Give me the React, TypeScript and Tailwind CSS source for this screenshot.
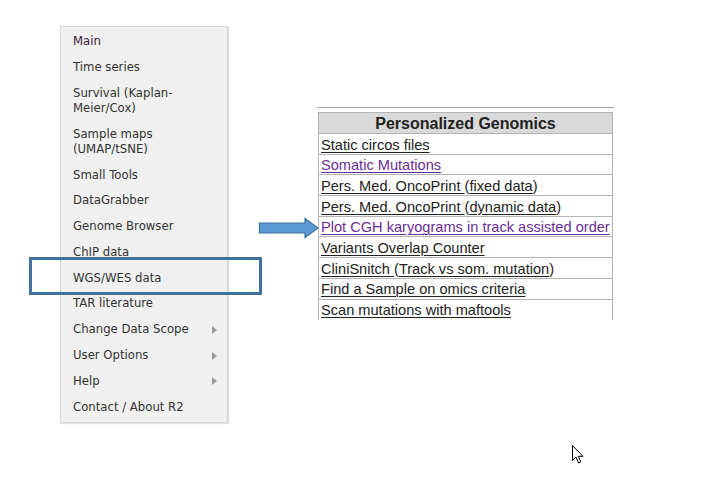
import React from "react";

const menu: { label: string[]; arrow?: boolean; color?: string }[] = [
  { label: ["Main"], color: "#3d1a3d" },
  { label: ["Time series"] },
  { label: ["Survival (Kaplan-", "Meier/Cox)"] },
  { label: ["Sample maps", "(UMAP/tSNE)"] },
  { label: ["Small Tools"] },
  { label: ["DataGrabber"] },
  { label: ["Genome Browser"] },
  { label: ["ChIP data"] },
  { label: ["WGS/WES data"] },
  { label: ["TAR literature"] },
  { label: ["Change Data Scope"], arrow: true },
  { label: ["User Options"], arrow: true },
  { label: ["Help"], arrow: true },
  { label: ["Contact / About R2"] },
];

const U = ({ children, c }: { children: React.ReactNode; c?: string }) => (
  <span className="underline decoration-1 underline-offset-[2px]" style={c ? { color: c } : undefined}>
    {children}
  </span>
);

const purple = "#6b2d94";

const rows: React.ReactNode[] = [
  <U>Static circos files</U>,
  <U c={purple}>Somatic Mutations</U>,
  <>
    <U>Pers. Med. OncoPrint </U>(<U>fixed data</U>)
  </>,
  <>
    <U>Pers. Med. OncoPrint </U>(<U>dynamic data</U>)
  </>,
  <U c={purple}>Plot CGH karyograms in track assisted order</U>,
  <U>Variants Overlap Counter</U>,
  <>
    <U>CliniSnitch </U>(<U>Track vs som. mutation</U>)
  </>,
  <U>Find a Sample on omics criteria</U>,
  <U>Scan mutations with maftools</U>,
];

export default function App() {
  return (
    <div className="relative w-[702px] h-[479px] bg-white overflow-hidden">
      <div className="flex items-start">
        {/* Menu */}
        <div
          className="ml-[60px] mt-[26px] w-[168px] bg-[#f0f0f0] border border-[#d6d6d6] shadow-[1px_1px_1px_rgba(0,0,0,0.12)] pt-[2px] pb-[2px] text-[11.7px] text-[#333]"
          style={{ fontFamily: '"DejaVu Sans", Verdana, sans-serif' }}
        >
          {menu.map((m, i) => (
            <div key={i} className="relative flex items-start pl-[12px] py-[5.4px] leading-[15px]" style={m.color ? { color: m.color } : undefined}>
              <div>
                {m.label.map((l, j) => (
                  <div key={j}>{l}</div>
                ))}
              </div>
              {m.arrow && (
                <span className="absolute left-[151px] top-[9px] w-0 h-0 border-y-[4.5px] border-y-transparent border-l-[5px] border-l-[#9a9a9a]" />
              )}
            </div>
          ))}
        </div>

        {/* Table */}
        <div className="ml-[89px] mt-[107px] w-[297px]" style={{ fontFamily: '"Liberation Sans", Arial, sans-serif' }}>
          <div className="h-px bg-[#a8a8a8] w-[297px]" />
          <div className="mt-[4px] ml-[1px] w-[295px] border-x border-t border-[#b4b4b4]">
            <div className="h-[21px] bg-[#d9d9d9] border-b border-[#b4b4b4] text-center font-bold text-[16px] leading-[21px] text-[#222]">
              Personalized Genomics
            </div>
            {rows.map((r, i) => (
              <div
                key={i}
                className={`h-[20.7px] pl-[2px] pt-[1.5px] text-[14.6px] leading-[18px] text-[#222] whitespace-nowrap ${i < rows.length - 1 ? "border-b border-[#b4b4b4]" : ""}`}
              >
                {r}
              </div>
            ))}
          </div>
        </div>
      </div>

      {/* Highlight rectangle */}
      <div className="absolute left-[29px] top-[257px] w-[233px] h-[38px] border-[3px] border-[#41719c]" />

      {/* Arrow */}
      <svg className="absolute left-[258px] top-[217px]" width="62" height="22" viewBox="0 0 62 22">
        <path d="M1.5 6 H47 V1.5 L60 11 L47 20.5 V16 H1.5 Z" fill="#5b9bd5" stroke="#41719c" strokeWidth="1.2" />
      </svg>

      {/* Mouse cursor */}
      <svg className="absolute left-[572px] top-[445px]" width="14" height="20" viewBox="0 0 14 20">
        <path d="M0.5 0.5 V15.5 L4 12 L6.5 18 L8.8 17 L6.3 11.3 H11 Z" fill="#fff" stroke="#000" strokeWidth="1" strokeLinejoin="miter" />
      </svg>
    </div>
  );
}
